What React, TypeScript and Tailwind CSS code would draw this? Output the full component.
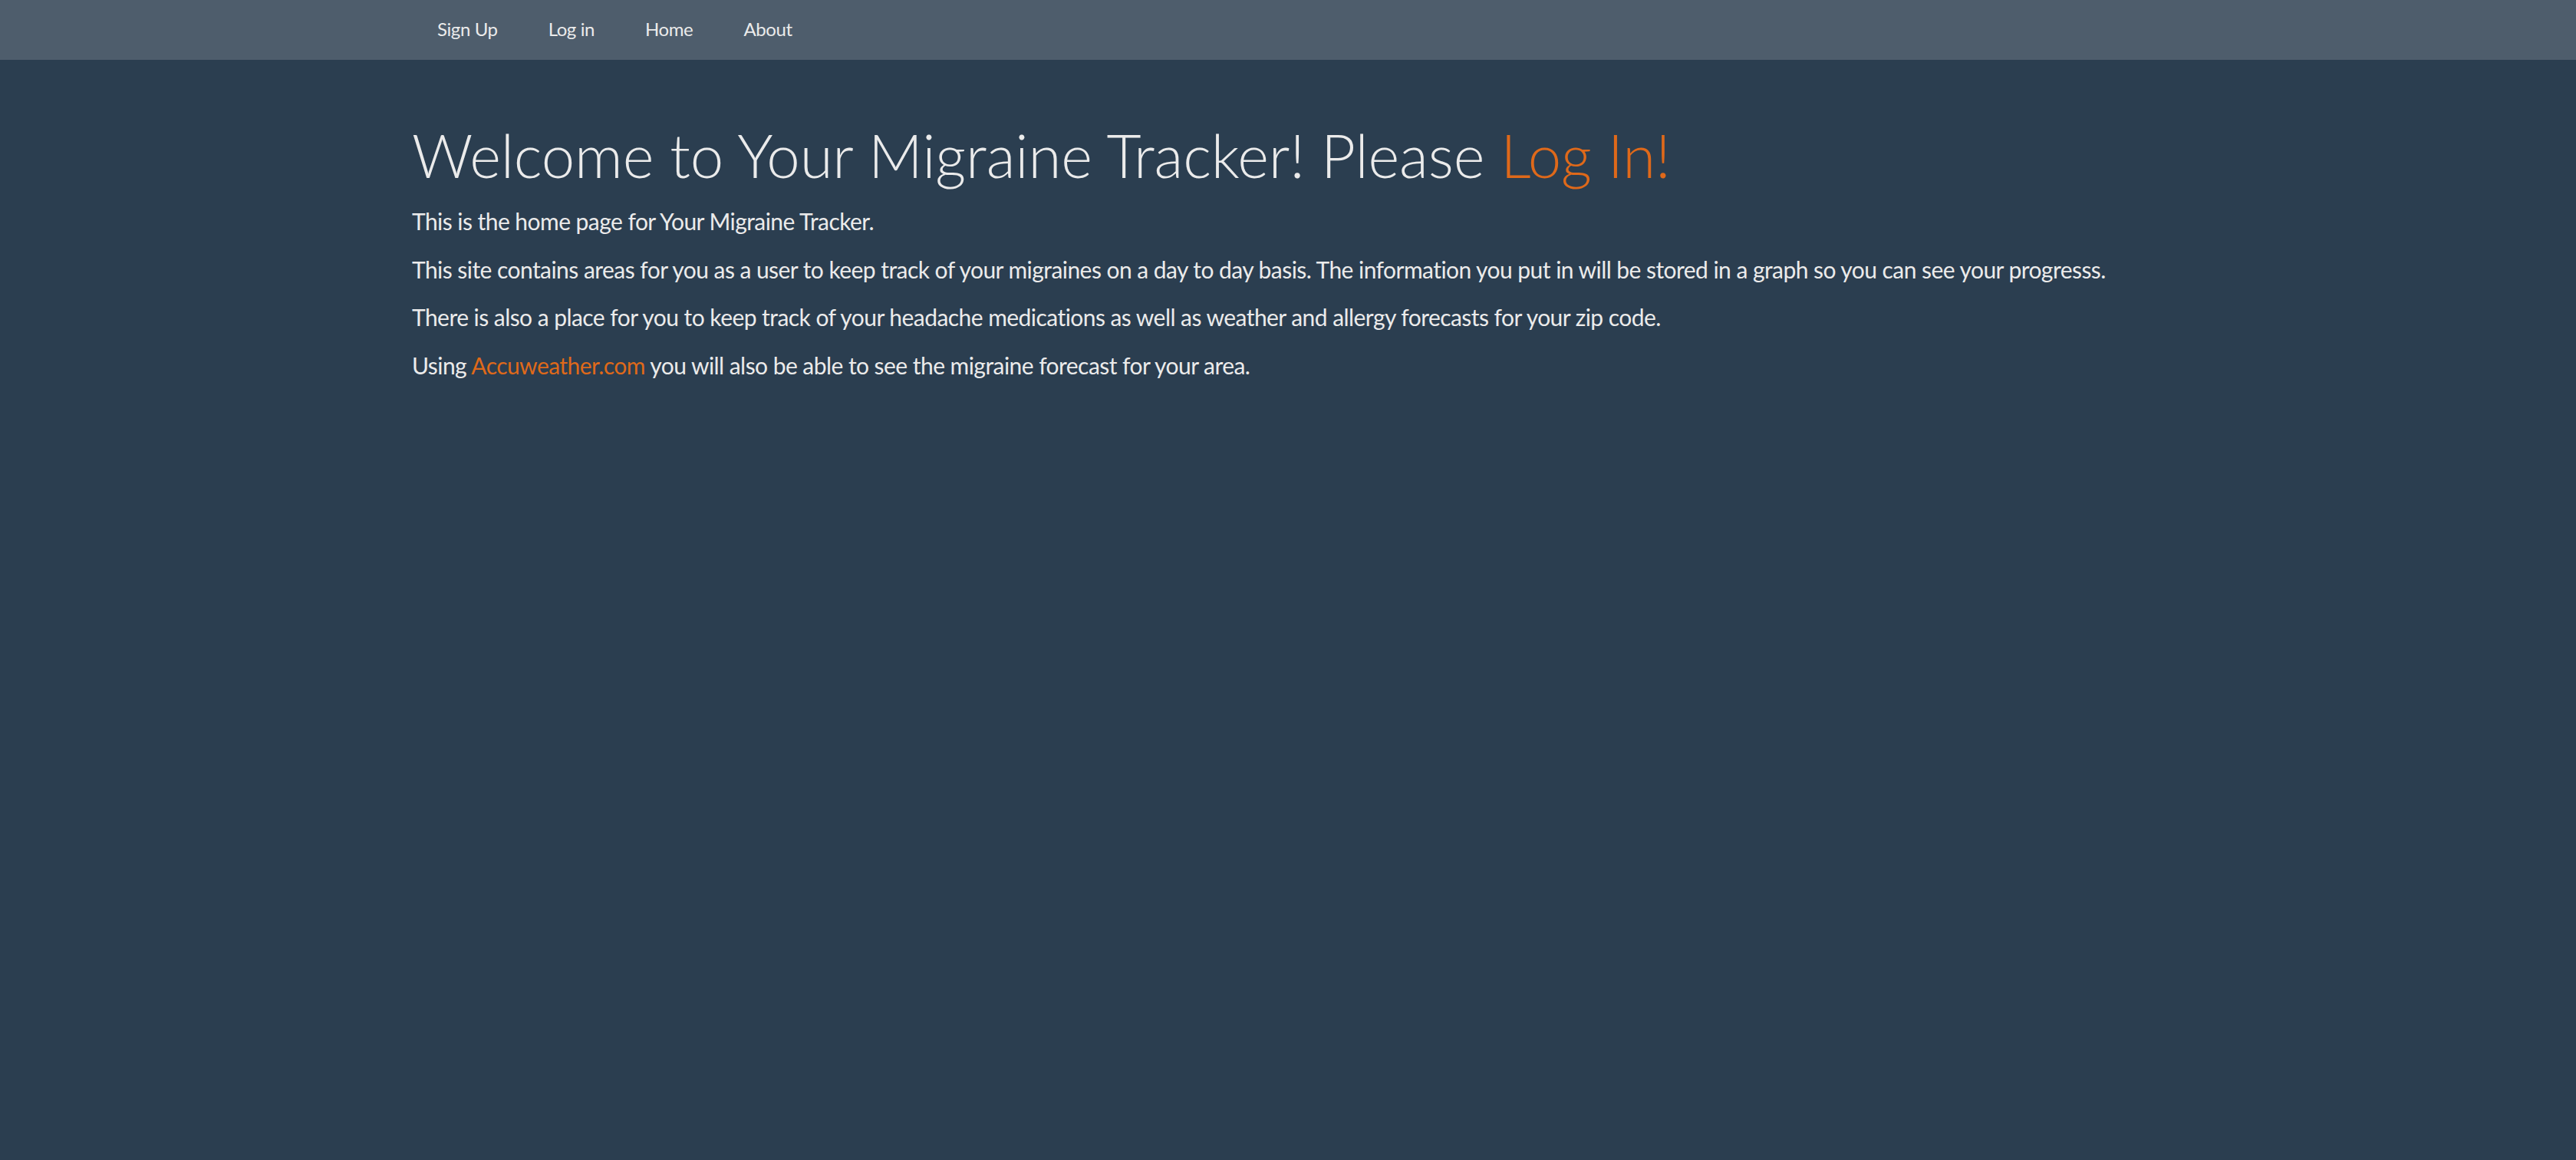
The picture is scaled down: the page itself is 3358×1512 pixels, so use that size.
export default function App() {
  const links = ["Sign Up", "Log in", "Home", "About"];
  return (
    <div className="min-h-screen bg-[#2b3e50] font-['Lato','Noto_Sans',sans-serif] text-[#ebebeb]">
      <nav className="h-[78px] bg-[#4e5d6c]">
        <div className="mx-auto flex h-full w-[2340px] items-center px-[28px] pb-[3px]">
          <ul className="flex">
            {links.map((l) => (
              <li key={l}>
                <a href="#" className="block px-[33px] text-[24px] tracking-[-0.4px] text-[#ebebeb]">
                  {l}
                </a>
              </li>
            ))}
          </ul>
        </div>
      </nav>
      <main className="mx-auto w-[2340px] px-[28px]">
        <h1 className="mt-[82px] mb-[21px] text-[78px] leading-[1.1] font-light tracking-[-0.15px] text-[#ebebeb]">
          Welcome to Your Migraine Tracker! Please{" "}
          <a href="#" className="text-[#df691a]">
            Log In!
          </a>
        </h1>
        <div className="text-[30px] leading-[1.42857] tracking-[-0.55px]">
          <p className="mb-[20px]">This is the home page for Your Migraine Tracker.</p>
          <p className="mb-[20px]">
            This site contains areas for you as a user to keep track of your migraines on a day to day basis. The information you put in will be stored in a graph so you can see your progresss.
          </p>
          <p className="mb-[20px]">
            There is also a place for you to keep track of your headache medications as well as weather and allergy forecasts for your zip code.
          </p>
          <p className="mb-[20px]">
            Using{" "}
            <a href="#" className="text-[#df691a]">
              Accuweather.com
            </a>{" "}
            you will also be able to see the migraine forecast for your area.
          </p>
        </div>
      </main>
    </div>
  );
}
